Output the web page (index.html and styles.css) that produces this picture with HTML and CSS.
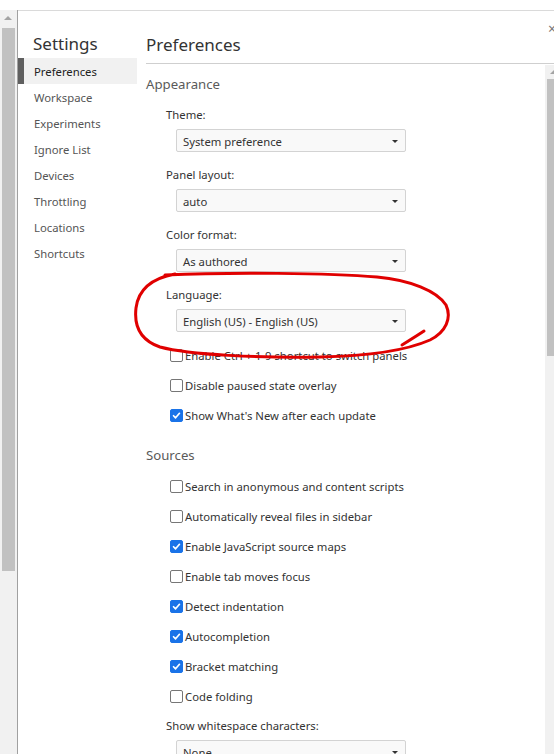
FILE: index.html
```html
<!DOCTYPE html>
<html>
<head>
<meta charset="utf-8">
<link rel="stylesheet" href="styles.css">
</head>
<body>
<div class="frame">
  <div class="lscroll">
    <div class="arrow-up"></div>
    <div class="lthumb"></div>
  </div>
  <div class="panel">
    <nav class="sidebar">
      <div class="title">Settings</div>
      <div class="item selected">Preferences</div>
      <div class="item">Workspace</div>
      <div class="item">Experiments</div>
      <div class="item">Ignore List</div>
      <div class="item">Devices</div>
      <div class="item">Throttling</div>
      <div class="item">Locations</div>
      <div class="item">Shortcuts</div>
    </nav>
    <div class="main">
      <div class="header">
        <h1>Preferences</h1>
        <span class="close">×</span>
      </div>
      <div class="body">
        <div class="content">
          <div class="section">
            <div class="section-title">Appearance</div>
            <div class="field">
              <div class="label">Theme:</div>
              <div class="select"><span>System preference</span><i class="caret"></i></div>
            </div>
            <div class="field">
              <div class="label">Panel layout:</div>
              <div class="select"><span>auto</span><i class="caret"></i></div>
            </div>
            <div class="field">
              <div class="label">Color format:</div>
              <div class="select"><span>As authored</span><i class="caret"></i></div>
            </div>
            <div class="field">
              <div class="label">Language:</div>
              <div class="select"><span>English (US) - English (US)</span><i class="caret"></i></div>
            </div>
            <div class="check"><span class="box"></span><span>Enable Ctrl + 1-9 shortcut to switch panels</span></div>
            <div class="check"><span class="box"></span><span>Disable paused state overlay</span></div>
            <div class="check"><span class="box on"><svg viewBox="0 0 13 13"><path d="M3 6.8 L5.4 9.2 L10 3.9" /></svg></span><span>Show What's New after each update</span></div>
          </div>
          <div class="section">
            <div class="section-title">Sources</div>
            <div class="check"><span class="box"></span><span>Search in anonymous and content scripts</span></div>
            <div class="check"><span class="box"></span><span>Automatically reveal files in sidebar</span></div>
            <div class="check"><span class="box on"><svg viewBox="0 0 13 13"><path d="M3 6.8 L5.4 9.2 L10 3.9" /></svg></span><span>Enable JavaScript source maps</span></div>
            <div class="check"><span class="box"></span><span>Enable tab moves focus</span></div>
            <div class="check"><span class="box on"><svg viewBox="0 0 13 13"><path d="M3 6.8 L5.4 9.2 L10 3.9" /></svg></span><span>Detect indentation</span></div>
            <div class="check"><span class="box on"><svg viewBox="0 0 13 13"><path d="M3 6.8 L5.4 9.2 L10 3.9" /></svg></span><span>Autocompletion</span></div>
            <div class="check"><span class="box on"><svg viewBox="0 0 13 13"><path d="M3 6.8 L5.4 9.2 L10 3.9" /></svg></span><span>Bracket matching</span></div>
            <div class="check"><span class="box"></span><span>Code folding</span></div>
            <div class="field">
              <div class="label">Show whitespace characters:</div>
              <div class="select"><span>None</span><i class="caret"></i></div>
            </div>
          </div>
        </div>
        <div class="rscroll">
          <div class="arrow-up"></div>
          <div class="rthumb"></div>
        </div>
      </div>
    </div>
  </div>
</div>
<svg class="annot" viewBox="0 0 554 754" width="554" height="754">
  <path d="M165,275 C230,272 330,273 377,277 C410,280 437,291 446,305 C452,318 446,332 430,340 C405,351 370,356 320,357 C260,358 190,355 160,347 C140,340 134,325 136,308 C138,292 148,279 175,274" />
  <path d="M424,331 C418,335 410,340 402,345" />
</svg>
</body>
</html>
```

FILE: styles.css
```css
* { box-sizing: border-box; }
html, body { margin: 0; padding: 0; }
body {
  width: 554px;
  height: 754px;
  overflow: hidden;
  background: #fff;
  font-family: "Noto Sans", "Open Sans", sans-serif;
  font-size: 11.3px;
  color: #333;
  position: relative;
}
.frame {
  margin-top: 10px;
  display: flex;
  height: 744px;
}
.lscroll {
  width: 18px;
  flex: none;
  background: #f1f1f1;
  border-right: 1px solid #a0a0a0;
  position: relative;
  padding-top: 6px;
}
.arrow-up {
  width: 0;
  height: 0;
  border-left: 4px solid transparent;
  border-right: 4px solid transparent;
  border-bottom: 4px solid #a3a3a3;
  margin-left: 4px;
}
.lthumb {
  margin: 8px 0 0 2px;
  width: 13px;
  height: 543px;
  background: #c1c1c1;
}
.panel {
  flex: 1;
  display: flex;
  border-top: 1px solid #dadada;
  min-width: 0;
}
.sidebar {
  width: 119px;
  flex: none;
  padding-top: 21px;
}
.title {
  font-size: 17px;
  line-height: 24px;
  padding-left: 15px;
  color: #333;
  margin-bottom: 2px;
}
.item {
  height: 26px;
  line-height: 27px;
  padding-left: 16px;
  color: #555;
}
.item.selected {
  background: #f1f1f1;
  border-left: 6px solid #5f5f5f;
  padding-left: 10px;
  color: #222;
}
.main {
  flex: 1;
  display: flex;
  flex-direction: column;
  min-width: 0;
  position: relative;
}
.header {
  margin-left: 9px;
  height: 53px;
  border-bottom: 1px solid #cfcfcf;
  padding-top: 22px;
}
h1 {
  margin: 0;
  font-weight: normal;
  font-size: 17px;
  line-height: 24px;
  color: #333;
}
.close {
  position: absolute;
  left: 411px;
  top: 8px;
  font-size: 14px;
  color: #777;
}
.body {
  flex: 1;
  display: flex;
  min-height: 0;
}
.content {
  width: 408px;
  flex: none;
  padding: 10px 0 0 9px;
}
.rscroll {
  flex: 1;
  margin-top: 1px;
  background: #f1f1f1;
  padding-top: 5px;
}
.rscroll .arrow-up {
  margin-left: 5px;
}
.rthumb {
  margin: 5px 0 0 2px;
  height: 277px;
  background: #c1c1c1;
}
.section + .section { padding-top: 10px; }
.section-title {
  font-size: 13.2px;
  line-height: 21px;
  color: #5a5a5a;
  margin-bottom: 10px;
}
.field {
  padding-left: 20px;
  margin-bottom: 13px;
}
.label {
  line-height: 19px;
  color: #333;
}
.select {
  margin: 5px 0 0 10px;
  width: 230px;
  height: 23px;
  border: 1px solid #d3d3d3;
  border-radius: 2px;
  background: #f9f9f9;
  display: flex;
  align-items: center;
  justify-content: space-between;
  padding: 1px 7px 0 6px;
  color: #333;
}
.caret {
  width: 0;
  height: 0;
  border-left: 3.5px solid transparent;
  border-right: 3.5px solid transparent;
  border-top: 3.5px solid #333;
}
.check {
  height: 20px;
  margin-bottom: 10px;
  padding-left: 24px;
  display: flex;
  align-items: center;
  gap: 2px;
  color: #333;
}
.check span:last-child { padding-top: 1px; }
.box {
  width: 13px;
  height: 13px;
  flex: none;
  border: 1px solid #767676;
  border-radius: 2px;
  background: #fff;
  display: flex;
}
.box.on {
  background: #1a73e8;
  border-color: #1a73e8;
}
.box svg {
  width: 11px;
  height: 11px;
}
.box svg path {
  fill: none;
  stroke: #fff;
  stroke-width: 2;
  stroke-linecap: round;
  stroke-linejoin: round;
}
.annot {
  position: absolute;
  left: 0;
  top: 0;
  pointer-events: none;
}
.annot path {
  fill: none;
  stroke: #e00000;
  stroke-width: 3;
  stroke-linecap: round;
}
```
